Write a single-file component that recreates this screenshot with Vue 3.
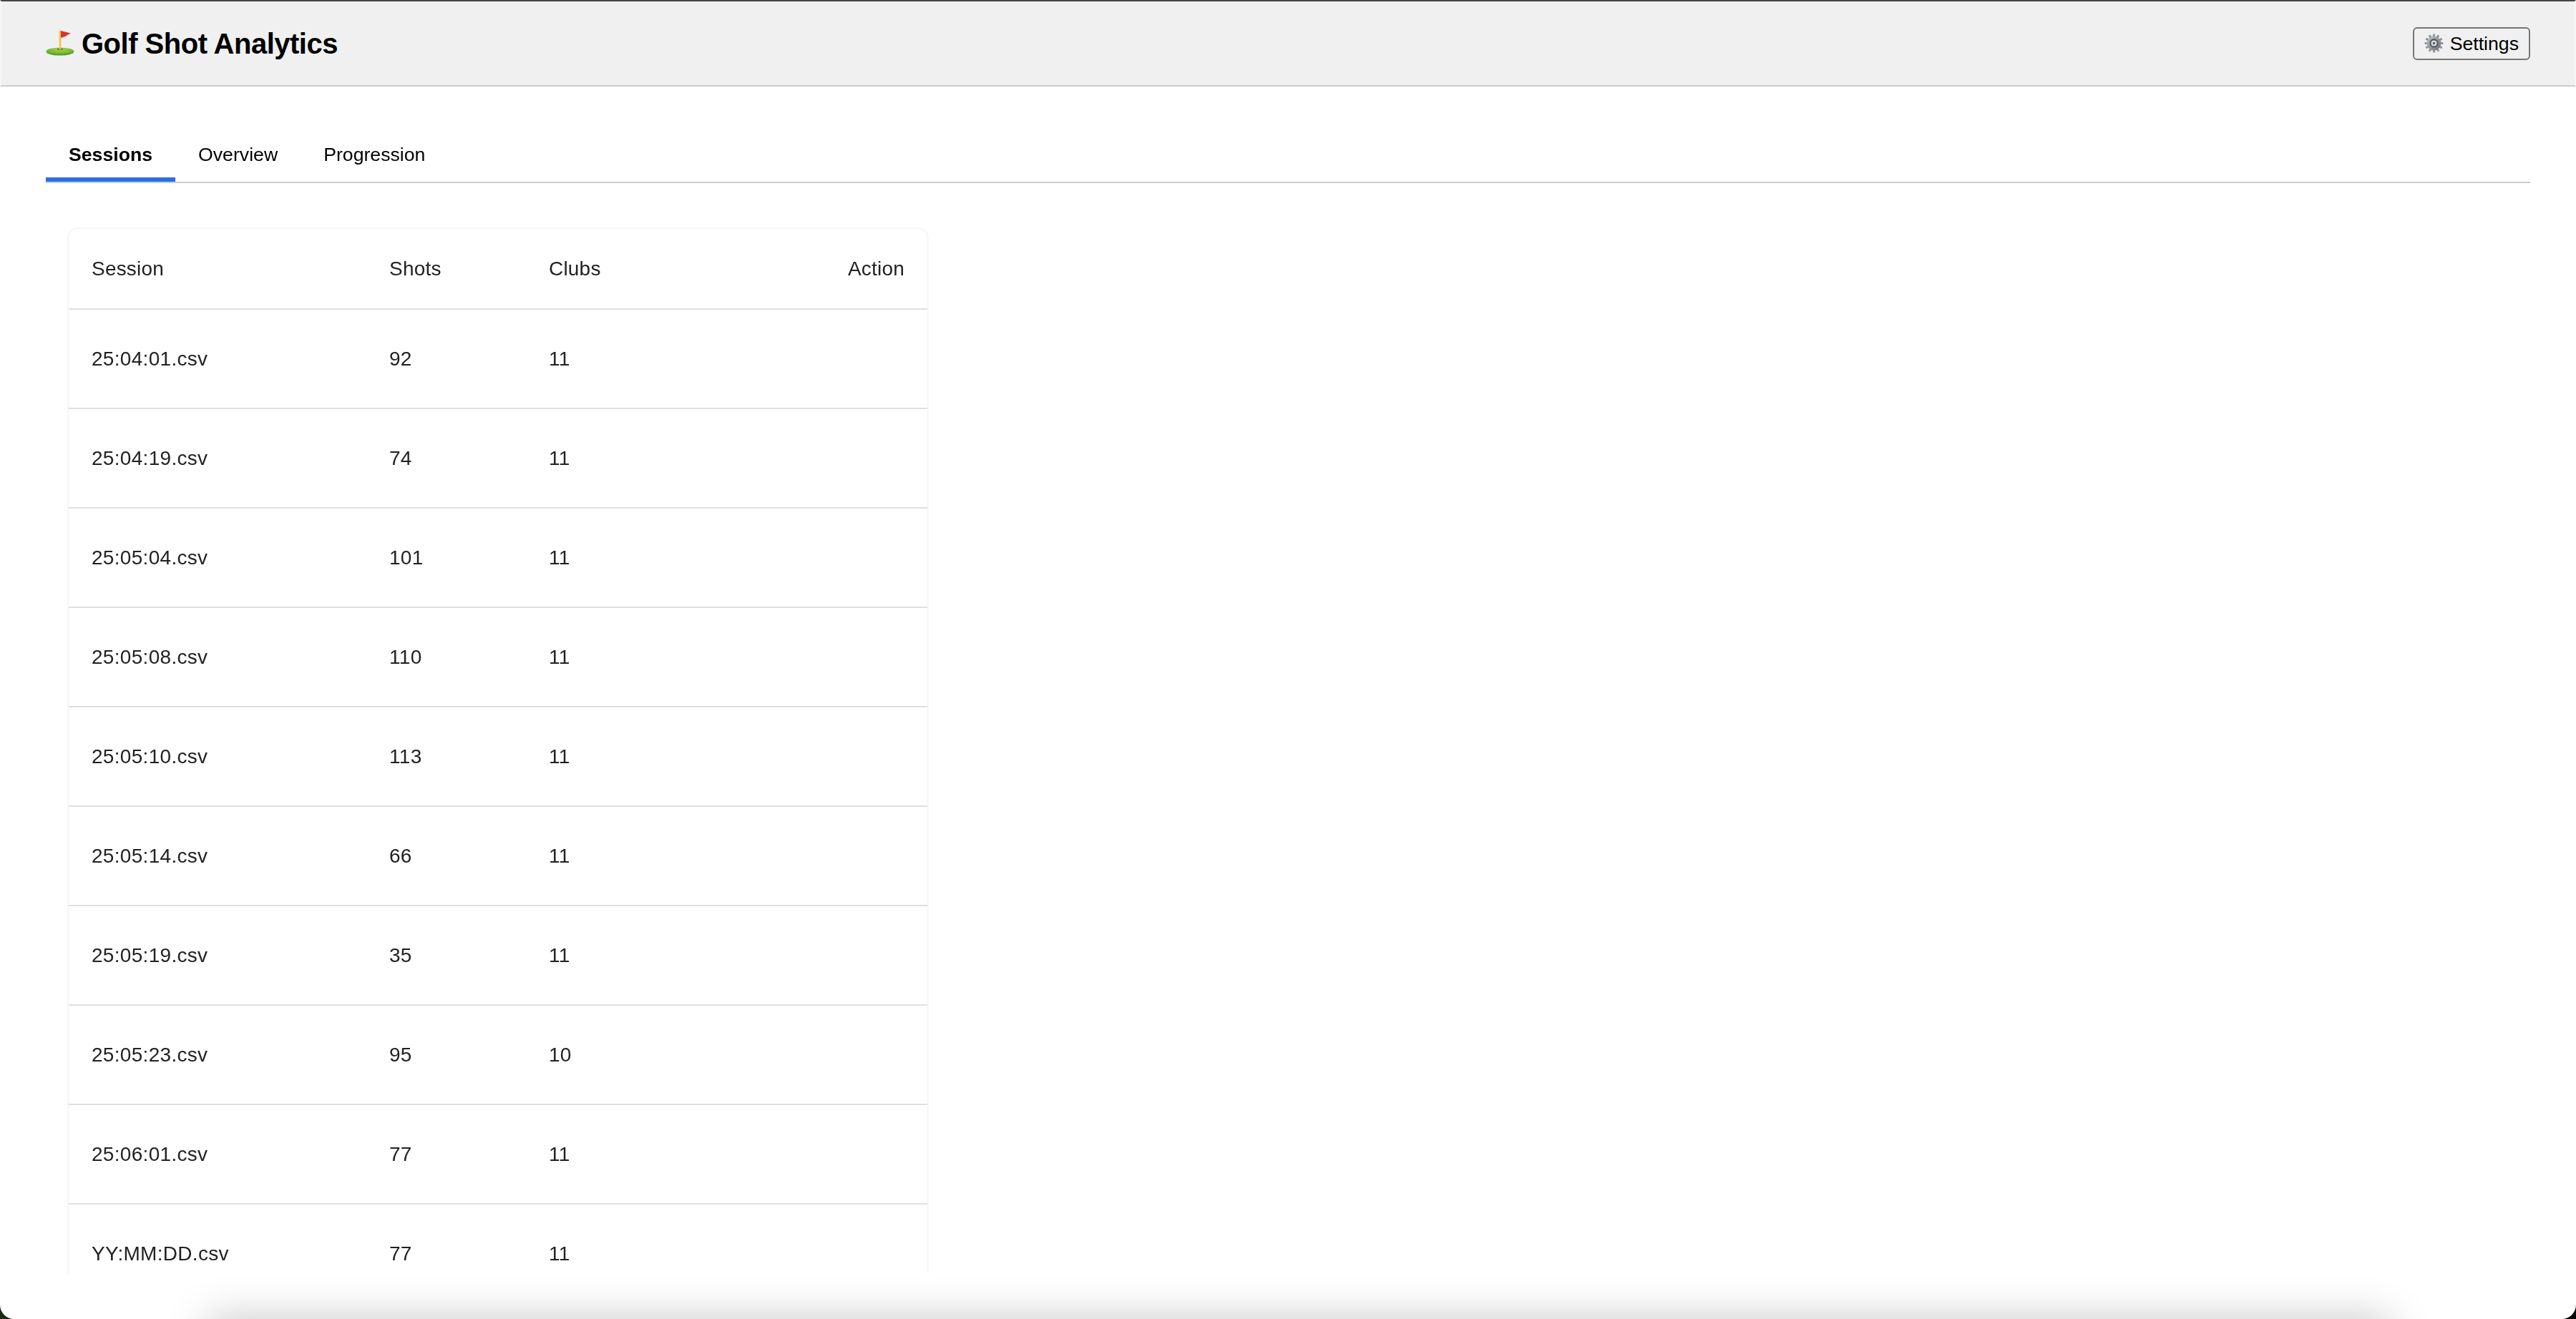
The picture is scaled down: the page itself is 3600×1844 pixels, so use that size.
<script setup>
const rows = [
  ['25:04:01.csv', 92, 11],
  ['25:04:19.csv', 74, 11],
  ['25:05:04.csv', 101, 11],
  ['25:05:08.csv', 110, 11],
  ['25:05:10.csv', 113, 11],
  ['25:05:14.csv', 66, 11],
  ['25:05:19.csv', 35, 11],
  ['25:05:23.csv', 95, 10],
  ['25:06:01.csv', 77, 11],
  ['YY:MM:DD.csv', 77, 11],
]
const teeth = Array.from({ length: 12 }, (_, i) => i * 30)
</script>

<template>
  <div class="window">
    <header class="topbar">
      <h1 class="title">
        <svg class="flag" viewBox="0 0 40 40" aria-hidden="true">
          <defs>
            <radialGradient id="green" cx="50%" cy="25%" r="75%">
              <stop offset="0" stop-color="#a5d64c" />
              <stop offset="0.65" stop-color="#74b534" />
              <stop offset="1" stop-color="#3f8a2a" />
            </radialGradient>
          </defs>
          <ellipse cx="20" cy="31" rx="19.5" ry="5.6" fill="url(#green)" />
          <ellipse cx="20" cy="27.8" rx="4.2" ry="1.2" fill="#4d7f22" />
          <rect x="18.7" y="1.5" width="2.6" height="27" fill="#f4c63c" />
          <path d="M21 2 L35 5.5 C31.5 7 29 8.5 27 10 C25 10.5 23 11.5 21 12 Z" fill="#d8352a" />
        </svg>
        <span>Golf Shot Analytics</span>
      </h1>
      <button class="settings" type="button">
        <svg class="gear" viewBox="0 0 28 28" aria-hidden="true">
          <defs>
            <linearGradient id="steel" x1="0" y1="0" x2="1" y2="1">
              <stop offset="0" stop-color="#c0c3c9" />
              <stop offset="1" stop-color="#6a6d73" />
            </linearGradient>
          </defs>
          <rect v-for="a in teeth" :key="a" x="12.4" y="0.5" width="3.2" height="6" rx="0.8" fill="#92959b" :transform="`rotate(${a} 14 14)`" />
          <circle cx="14" cy="14" r="10.2" fill="url(#steel)" />
          <circle cx="14" cy="14" r="6.4" fill="#54565b" />
          <circle cx="14" cy="14" r="4.2" fill="#d9dadc" />
          <circle cx="14" cy="14" r="1.7" fill="#55575b" />
        </svg>
        <span>Settings</span>
      </button>
    </header>

    <main class="content">
      <nav class="tabs">
        <button class="tab active" type="button">Sessions</button>
        <button class="tab" type="button">Overview</button>
        <button class="tab" type="button">Progression</button>
      </nav>

      <div class="table-scroll">
        <div class="card">
          <table class="sessions">
            <thead>
              <tr>
                <th class="c1">Session</th>
                <th class="c2">Shots</th>
                <th class="c3">Clubs</th>
                <th class="c4">Action</th>
              </tr>
            </thead>
            <tbody>
              <tr v-for="r in rows" :key="r[0]">
                <td>{{ r[0] }}</td>
                <td>{{ r[1] }}</td>
                <td>{{ r[2] }}</td>
                <td></td>
              </tr>
            </tbody>
          </table>
        </div>
      </div>
    </main>

    <div class="dock-shadow"></div>
  </div>
</template>

<style>
html { margin: 0; background: linear-gradient(90deg, #1c2a14 0 50%, #000 50%); }
body { margin: 0; }
</style>

<style scoped>
.window {
  position: relative;
  width: 3600px;
  height: 1844px;
  overflow: hidden;
  background: #fff;
  border-radius: 0 0 20px 20px;
  font-family: "Liberation Sans", Arial, sans-serif;
  color: #000;
}
.topbar {
  box-sizing: border-box;
  height: 121px;
  display: flex;
  align-items: center;
  justify-content: space-between;
  padding: 0 62px;
  background: #f0f0f0;
  border-top: 2px solid #444;
  border-bottom: 2px solid #ccc;
  border-left: 2px solid #f6f6f6;
  border-right: 2px solid #f6f6f6;
}
.title {
  display: flex;
  align-items: center;
  gap: 10px;
  margin: 0;
  font-size: 40px;
  font-weight: 700;
  line-height: 46px;
  letter-spacing: -0.5px;
}
.flag { width: 40px; height: 40px; flex: none; }
.settings {
  box-sizing: border-box;
  display: flex;
  align-items: center;
  gap: 9px;
  height: 46px;
  padding: 0 14px;
  background: #f0f0f0;
  border: 2px solid #767676;
  border-radius: 6px;
  font: 26.67px "Liberation Sans", Arial, sans-serif;
  color: #000;
}
.settings span { position: relative; top: 1px; }
.gear { width: 27px; height: 27px; flex: none; }
.content {
  padding: 54px 64px 0;
  will-change: opacity;
}
.tabs {
  display: flex;
  border-bottom: 2px solid #ccc;
}
.tab {
  box-sizing: border-box;
  height: 79px;
  padding: 10px 32px 0;
  margin: 0;
  background: none;
  border: 0;
  border-bottom: 6px solid transparent;
  font: 26.67px "Liberation Sans", Arial, sans-serif;
  color: #000;
}
.tab.active {
  font-weight: 700;
  border-bottom-color: #2b6de8;
}
.table-scroll {
  box-sizing: border-box;
  margin: 56px 0 0 24px;
  padding: 8px 8px 0;
  width: 1216px;
  height: 1468px;
  overflow: hidden;
}
.card {
  overflow: hidden;
  border-radius: 12px;
  background: #fff;
  box-shadow: 0 0 3px rgba(0, 0, 0, 0.15);
}
.sessions {
  width: 100%;
  border-collapse: collapse;
  table-layout: fixed;
  font-size: 28px;
  color: #222;
}
.sessions th, .sessions td {
  padding: 0 32px;
  text-align: left;
  font-weight: 400;
  border-bottom: 2px solid #e0e0e0;
}
.sessions th { height: 111px; letter-spacing: 0.2px; }
.sessions td { height: 137px; letter-spacing: 0.3px; }
.c1 { width: 352px; }
.c2 { width: 159px; }
.c3 { width: 159px; }
.sessions th.c4 { text-align: right; }
.dock-shadow {
  position: absolute;
  left: 290px;
  right: 260px;
  top: 1844px;
  height: 60px;
  box-shadow: 0 0 60px 0 rgba(0, 0, 0, 0.23);
}
</style>
